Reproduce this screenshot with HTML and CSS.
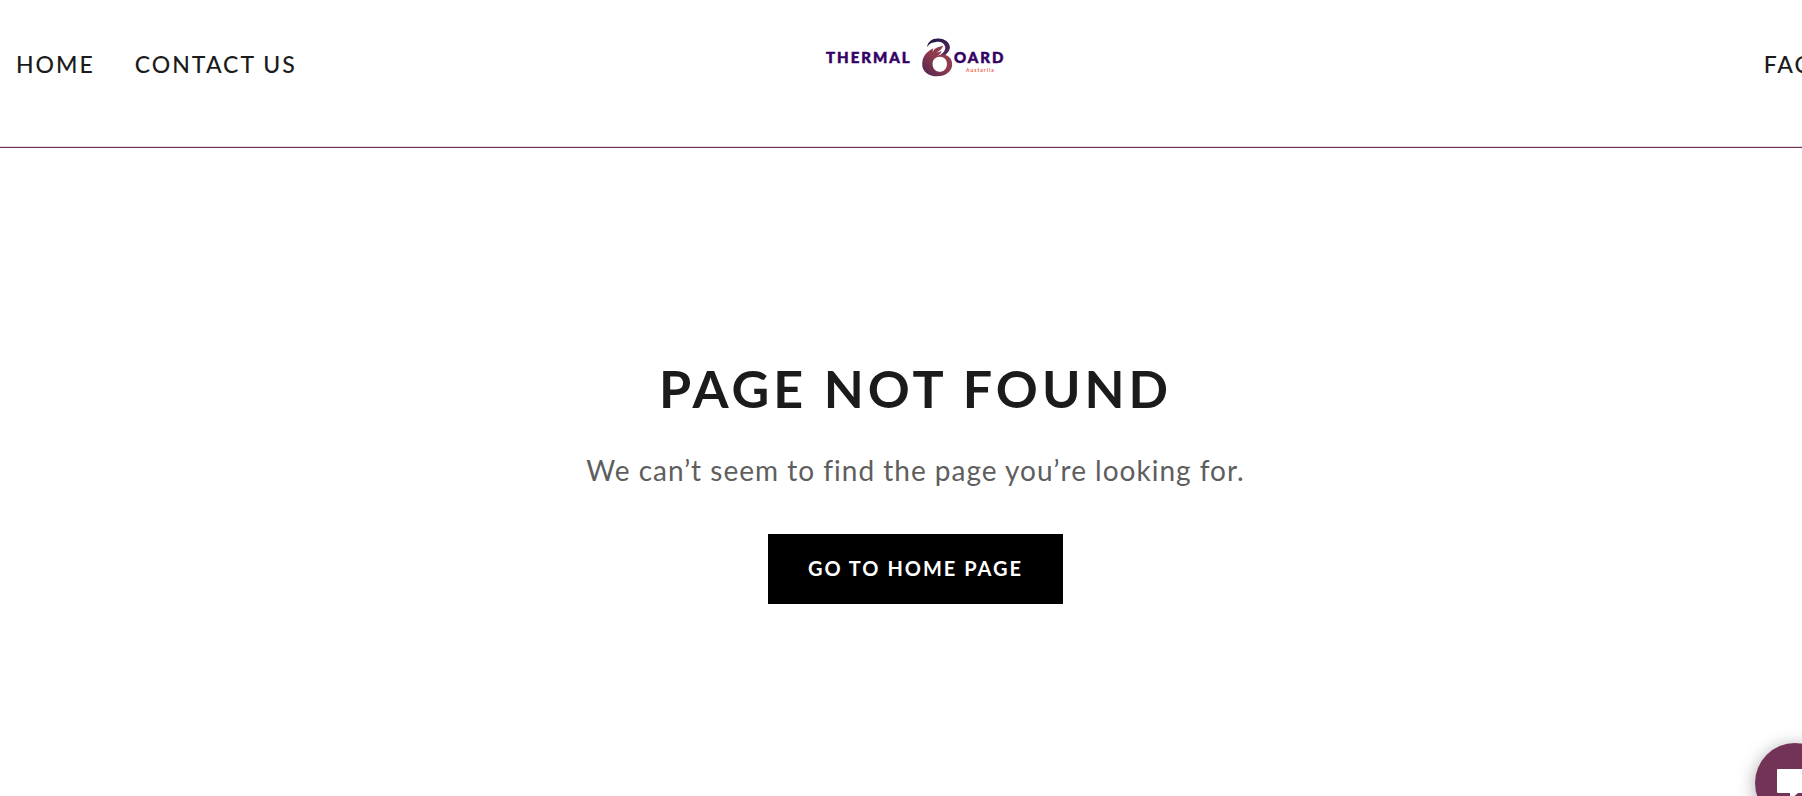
FILE: index.html
```html
<!DOCTYPE html>
<html lang="en">
<head>
    <meta charset="UTF-8">
    <meta name="viewport" content="width=device-width, initial-scale=1.0">
    <title>Thermal Board</title>
    <link rel="stylesheet" href="styles.css">
</head>
<body>
    <div class="page">
        <header class="header">
            <nav class="nav">
                <a href="#">HOME</a>
                <a href="#">CONTACT US</a>
            </nav>
            <a class="logo" href="#" aria-label="Thermal Board">
                <svg width="184" height="44" viewBox="0 0 184 44">
                    <defs>
                        <linearGradient id="top" x1="0" y1="0" x2="1" y2="1">
                            <stop offset="0" stop-color="#1c1440"/>
                            <stop offset="1" stop-color="#5a2a5c"/>
                        </linearGradient>
                        <linearGradient id="ring" x1="0" y1="1" x2="1" y2="0">
                            <stop offset="0" stop-color="#4a2150"/>
                            <stop offset="0.5" stop-color="#8e3b4e"/>
                            <stop offset="1" stop-color="#94404f"/>
                        </linearGradient>
                    </defs>
                    <text class="logo-name" x="2" y="27">THERMAL</text>
                    <g transform="translate(93 0) scale(0.37)">
                        <path fill="url(#top)" d="M27 30C30 14 42 6 58 7C76 8 90 18 89 32C88 41 82 47 75 53C70 51 66 51 62 52C72 45 78 37 76 29C73 18 62 15 52 16C40 17 31 22 27 30Z"/>
                        <path fill="url(#ring)" fill-rule="evenodd" d="M71 26C64 29 58 29 51 33C46 36 44 39 43 43C42 39 43 36 45 33C34 38 15 49 14 74C13 96 32 109 54 109C77 109 95 96 95 77C95 64 88 55 76 51C67 48 59 51 53 55C60 50 66 47 66 39C62 43 58 44 54 44C62 40 68 35 71 26ZM62 56C73 56 81 64 81 76C81 88 73 97 62 97C50 97 42 88 42 76C42 64 50 56 62 56Z"/>
                    </g>
                    <text class="logo-name" x="130" y="27">OARD</text>
                    <text class="logo-place" x="142" y="36">Austarlia</text>
                </svg>
            </a>
            <nav class="nav nav-right">
                <a href="#">FAQ</a>
            </nav>
        </header>
        <main class="content">
            <h1>PAGE NOT FOUND</h1>
            <p>We can’t seem to find the page you’re looking for.</p>
            <a class="home-button" href="#">GO TO HOME PAGE</a>
        </main>
    </div>
    <button class="chat" aria-label="Chat">
        <svg width="36" height="36" viewBox="0 0 36 36">
            <path fill="#fff" d="M1 4h30a1 1 0 0 1 1 1v22a1 1 0 0 1-1 1H21l-8 7v-7H1a1 1 0 0 1-1-1V5a1 1 0 0 1 1-1z"/>
        </svg>
    </button>
</body>
</html>
```
FILE: styles.css
```css
* {
    margin: 0;
    padding: 0;
    box-sizing: border-box;
}
body {
    font-family: Lato, sans-serif;
    background: white;
    overflow: hidden;
}
.page {
    width: calc(100% + 29px);
}
.header {
    display: grid;
    grid-template-columns: 1fr auto 1fr;
    align-items: start;
    padding: 36px 16px 67px;
    border-bottom: 1px solid #723356;
    box-shadow: inset 0 -1px #ddd;
}
.nav {
    display: flex;
    gap: 40px;
    padding-top: 12px;
}
.nav-right {
    justify-content: flex-end;
}
.nav a {
    color: #1b1b1b;
    font-size: 23px;
    font-weight: 500;
    line-height: 32px;
    letter-spacing: 2px;
    text-decoration: none;
}
.logo svg {
    display: block;
}
.logo-name {
    font-size: 15px;
    font-weight: 900;
    letter-spacing: 2px;
    fill: #330066;
    stroke: #330066;
    stroke-width: 0.5px;
}
.logo-place {
    font-size: 5px;
    font-weight: bold;
    letter-spacing: 1px;
    fill: #f0583f;
}
.content {
    padding: 208px 24px;
    text-align: center;
}
h1 {
    color: #1b1b1b;
    font-size: 52px;
    line-height: 64px;
    letter-spacing: 4px;
}
p {
    margin: 26px 0 40px;
    color: #5e5e5e;
    font-size: 28px;
    line-height: 48px;
    letter-spacing: 1px;
}
.home-button {
    display: inline-block;
    padding: 18px 40px 20px;
    background: black;
    color: white;
    font-size: 20px;
    font-weight: bold;
    line-height: 32px;
    letter-spacing: 2px;
    text-decoration: none;
}
.chat {
    position: fixed;
    right: -33px;
    bottom: -27px;
    width: 80px;
    height: 80px;
    padding: 22px;
    border: none;
    border-radius: 50%;
    background: #723356;
    box-shadow: 0 3px 18px rgba(0, 0, 0, 0.35);
    cursor: pointer;
}
```
